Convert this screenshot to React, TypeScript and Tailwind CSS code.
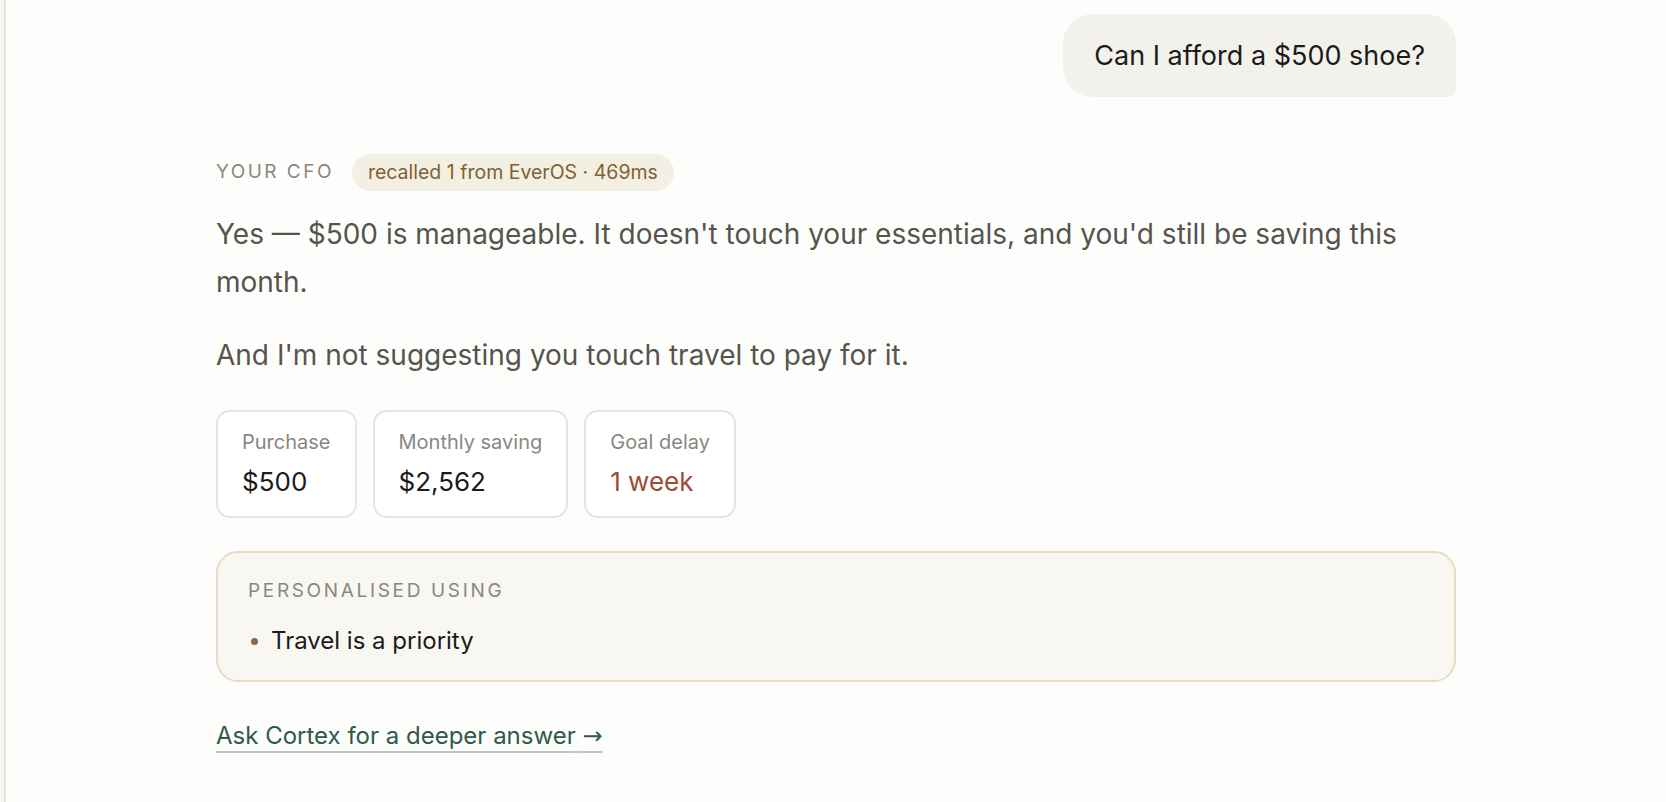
const metrics = [
  { label: "Purchase", value: "$500", tone: "text-[#1c1b19]" },
  { label: "Monthly saving", value: "$2,562", tone: "text-[#1c1b19]" },
  { label: "Goal delay", value: "1 week", tone: "text-[#9b4c35]" },
];

const signals = ["Travel is a priority"];

function UserBubble({ text }: { text: string }) {
  return (
    <div className="flex justify-end">
      <div className="rounded-[30px] rounded-br-[8px] bg-[#f2f1ec] px-[31px] py-[25px] text-[27px] leading-[33px] text-[#1c1b19]">
        {text}
      </div>
    </div>
  );
}

function MetricCard({ label, value, tone }: { label: string; value: string; tone: string }) {
  return (
    <div className="flex flex-col gap-[12px] rounded-[14px] border-2 border-[#e7e5df] bg-white px-[24px] py-[18px]">
      <span className="text-[20px] leading-[24px] text-[#8a877f]">{label}</span>
      <span className={`text-[26px] leading-[32px] ${tone}`}>{value}</span>
    </div>
  );
}

export default function App() {
  return (
    <div
      className="flex min-h-screen bg-[#fdfdfc]"
      style={{ fontFamily: "Inter, 'Noto Sans', sans-serif" }}
    >
      <aside className="w-[6px] shrink-0 border-r-2 border-[#e4e3dc] bg-[#f7f6f2]" />
      <main className="flex-1">
        <div className="mx-auto w-[1240px] pt-[14px]">
          <UserBubble text="Can I afford a $500 shoe?" />

          <section className="mt-[57px]">
            <div className="flex items-center gap-[18px]">
              <span className="text-[19px] tracking-[0.13em] text-[#8a877e]">YOUR CFO</span>
              <span className="rounded-full bg-[#f4efe3] px-[16px] py-[6px] text-[19.5px] leading-[25px] text-[#7d6232]">
                recalled 1 from EverOS · 469ms
              </span>
            </div>

            <p className="mt-[19px] text-[28px] leading-[48px] text-[#57544e]">
              Yes — $500 is manageable. It doesn't touch your essentials, and you'd still be saving this
              month.
            </p>
            <p className="mt-[25px] text-[28px] leading-[48px] text-[#57544e]">
              And I'm not suggesting you touch travel to pay for it.
            </p>

            <div className="mt-[31px] flex gap-[16px]">
              {metrics.map((m) => (
                <MetricCard key={m.label} {...m} />
              ))}
            </div>

            <div className="mt-[33px] rounded-[22px] border-2 border-[#e8dcc4] bg-[#f8f7f2] px-[30px] pb-[25px] pt-[26px]">
              <div className="text-[19px] leading-[24px] tracking-[0.14em] text-[#8a877f]">
                PERSONALISED USING
              </div>
              <ul className="mt-[24px] flex flex-col gap-2">
                {signals.map((s) => (
                  <li key={s} className="flex items-center gap-[13px] text-[24px] leading-[28px] text-[#1c1b19]">
                    <span className="ml-[3px] h-[7px] w-[7px] rounded-full bg-[#8b6a3e]" />
                    {s}
                  </li>
                ))}
              </ul>
            </div>

            <a
              href="#"
              className="mt-[40px] inline-block text-[24px] leading-[28px] text-[#2f5a4a] underline decoration-[#b9c9c1] decoration-2 underline-offset-[7px]"
            >
              Ask Cortex for a deeper answer{" "}
              <span style={{ fontFamily: "'DejaVu Sans', sans-serif" }}>→</span>
            </a>
          </section>
        </div>
      </main>
    </div>
  );
}
